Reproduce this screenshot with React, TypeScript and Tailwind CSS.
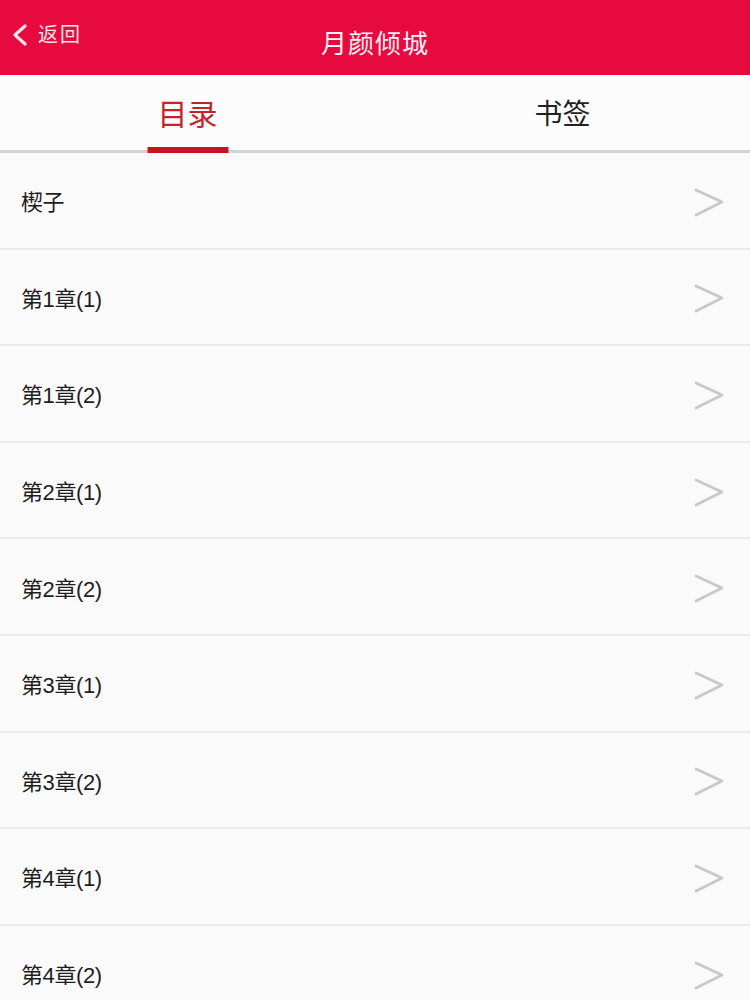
import { useState } from "react";

const chapters = [
  "楔子",
  "第1章(1)",
  "第1章(2)",
  "第2章(1)",
  "第2章(2)",
  "第3章(1)",
  "第3章(2)",
  "第4章(1)",
  "第4章(2)",
];

const font = { fontFamily: '"Liberation Sans", "Noto Sans CJK SC", sans-serif' };

const Header = () => (
  <div className="relative flex h-[75px] items-center justify-center bg-[#e60a3f] text-white">
    <button className="absolute left-[11px] top-[24px] flex items-center gap-[9px] text-[20px] leading-none text-[#fbe3ea]">
      <svg width="18" height="22" viewBox="0 0 18 22" fill="none">
        <path d="M14 2 L4 11 L14 20" stroke="currentColor" strokeWidth="3.2" strokeLinecap="round" strokeLinejoin="round" />
      </svg>
      <span className="tracking-[2px]">返回</span>
    </button>
    <h1 className="mt-[14px] text-[26px] font-normal tracking-[1px] text-[#fdf0f3]">月颜倾城</h1>
  </div>
);

const Tabs = () => {
  const [tab, setTab] = useState(0);
  return (
    <div className="relative flex h-[78px] border-b-[3px] border-[#d3d3d3] bg-[#fdfcfd]">
      {["目录", "书签"].map((t, i) => (
        <button key={t} onClick={() => setTab(i)} className="relative flex flex-1 items-center justify-center">
          <span className={`mt-[4px] ${i === tab ? "text-[30px] text-[#c0252c]" : "text-[28px] text-[#222222]"}`}>{t}</span>
          {i === tab && <span className="absolute bottom-[-3px] left-1/2 h-[6px] w-[81px] -translate-x-1/2 bg-[#c5161f]" />}
        </button>
      ))}
    </div>
  );
};

const Row = ({ title }: { title: string }) => (
  <div className="flex h-[96.6px] items-center justify-between border-b-2 border-[#ebebeb] bg-[#fbfafb] pl-[21px] pr-[26px] pt-[5px]">
    <span className="text-[22px] tracking-[-0.4px] text-[#1e1e1e]">{title}</span>
    <svg width="30" height="30" viewBox="0 0 30 30" fill="none">
      <path d="M2 2 L28 14 L2 27" stroke="#c8c8c8" strokeWidth="2.8" strokeLinecap="round" strokeLinejoin="round" />
    </svg>
  </div>
);

export default function App() {
  return (
    <div className="h-[1000px] w-[750px] overflow-hidden bg-[#fbfafb]" style={font}>
      <Header />
      <Tabs />
      <div>
        {chapters.map((c) => (
          <Row key={c} title={c} />
        ))}
      </div>
    </div>
  );
}
